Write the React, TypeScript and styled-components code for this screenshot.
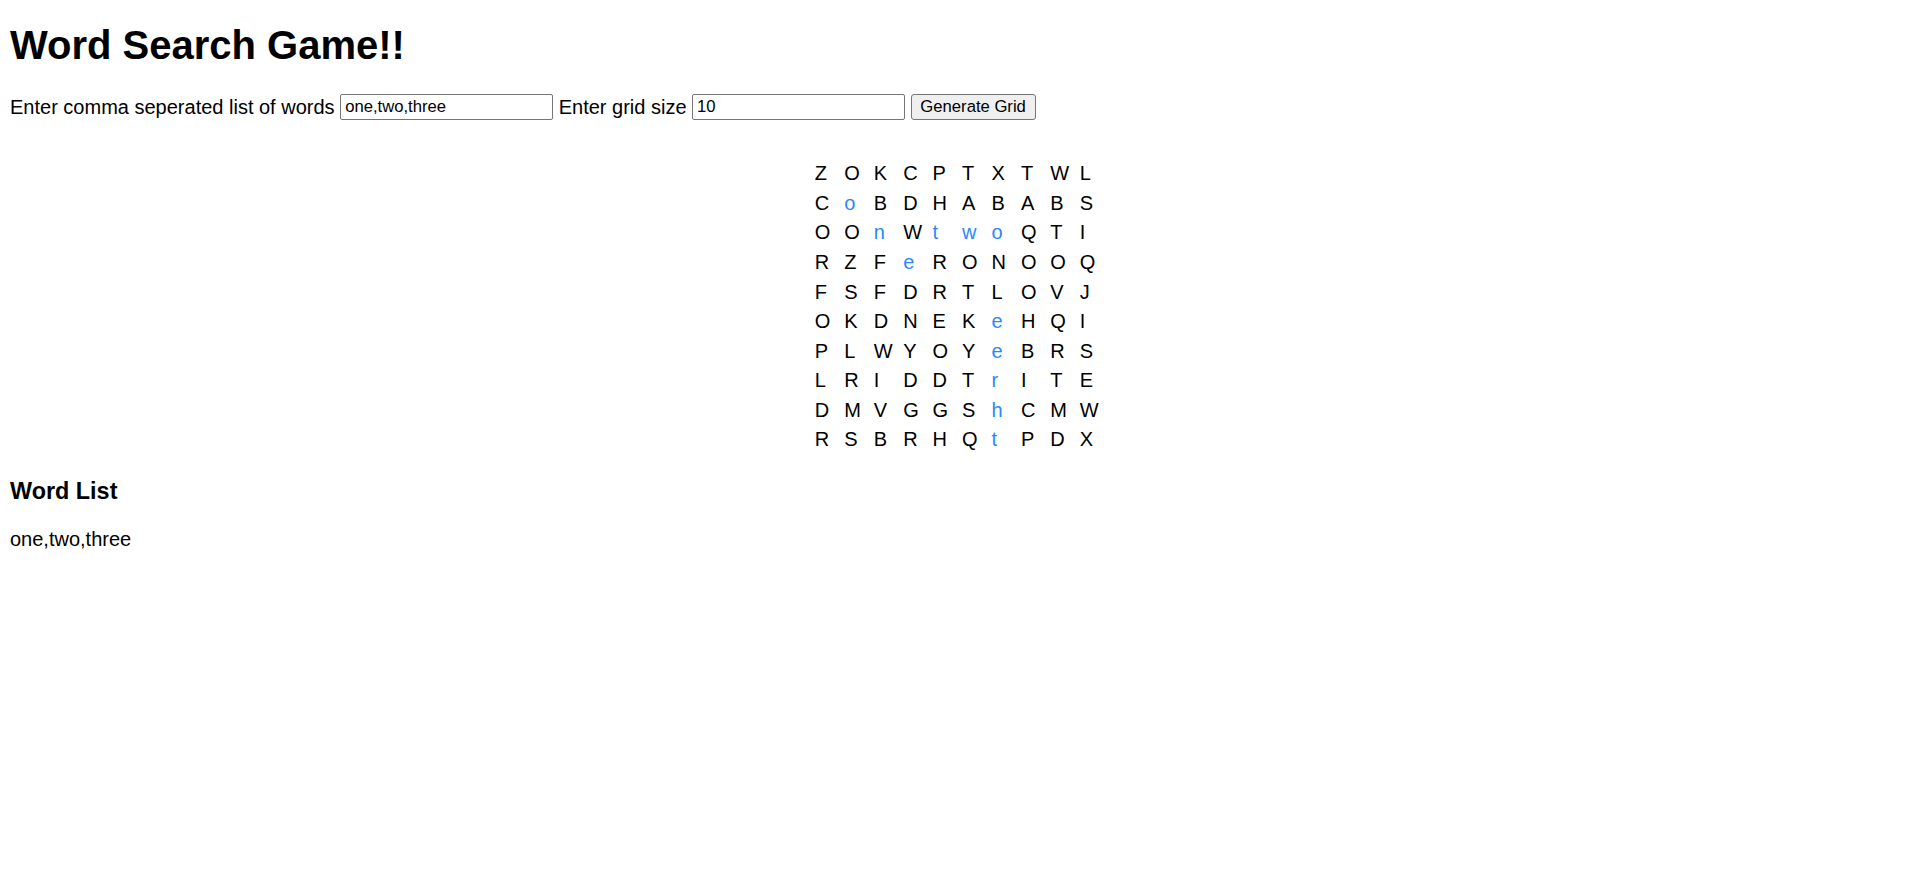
import React, { useState } from 'react';
import styled, { createGlobalStyle } from 'styled-components';

const GlobalStyle = createGlobalStyle`
  html, body {
    margin: 0;
    padding: 0;
    background: #ffffff;
  }
  body {
    font-family: "Liberation Sans", Arial, sans-serif;
    font-size: 20px;
    color: #000000;
  }
`;

const ROWS = [
  'ZOKCPTXTWL',
  'CoBDHABABS',
  'OOnWtwoQTI',
  'RZFeRONOOQ',
  'FSFDRTLOVJ',
  'OKDNEKeHQI',
  'PLWYOYeBRS',
  'LRIDDTrITE',
  'DMVGGShCMW',
  'RSBRHQtPDX',
];

function App() {
  const [words, setWords] = useState('one,two,three');
  const [size, setSize] = useState('10');

  return (
    <Page>
      <GlobalStyle />
      <Title>Word Search Game!!</Title>
      <Form onSubmit={(e) => e.preventDefault()}>
        <Label>Enter comma seperated list of words</Label>
        <TextInput value={words} onChange={(e) => setWords(e.target.value)} />
        <Label>Enter grid size</Label>
        <TextInput value={size} onChange={(e) => setSize(e.target.value)} />
        <Button type="submit">Generate Grid</Button>
      </Form>
      <GridWrap>
        <Grid>
          {ROWS.map((row, r) =>
            row.split('').map((ch, c) => (
              <Cell key={r + '-' + c} $found={ch === ch.toLowerCase()}>
                {ch}
              </Cell>
            ))
          )}
        </Grid>
      </GridWrap>
      <SubTitle>Word List</SubTitle>
      <WordList>{words}</WordList>
    </Page>
  );
}

export default App;

const Page = styled.div`
  padding: 0 10px;
`;

const Title = styled.h1`
  margin: 22px 0 0;
  font-size: 40px;
  line-height: 46px;
  font-weight: bold;
`;

const Form = styled.form`
  display: flex;
  align-items: center;
  gap: 5.56px;
  height: 26px;
  margin-top: 26px;
`;

const Label = styled.label`
  font-size: 20px;
  line-height: 23px;
  white-space: nowrap;
`;

const TextInput = styled.input`
  box-sizing: border-box;
  width: 213px;
  height: 26px;
  padding: 1px 4px;
  border: 1px solid #767676;
  border-radius: 2px;
  font-family: "Liberation Sans", Arial, sans-serif;
  font-size: 16.67px;
  color: #000000;
  background: #ffffff;
  outline: none;
`;

const Button = styled.button`
  box-sizing: border-box;
  width: 125px;
  height: 26px;
  padding: 1px 8px;
  border: 1px solid #767676;
  border-radius: 3px;
  background: #efefef;
  font-family: "Liberation Sans", Arial, sans-serif;
  font-size: 16.67px;
  color: #000000;
  cursor: pointer;
`;

const GridWrap = styled.div`
  display: flex;
  justify-content: center;
  margin-top: 39px;
`;

const Grid = styled.div`
  display: grid;
  grid-template-columns: repeat(10, 29.44px);
  grid-auto-rows: 29.58px;
`;

const Cell = styled.span<{ $found: boolean }>`
  display: flex;
  align-items: center;
  padding-left: 2px;
  font-size: 20px;
  line-height: 23px;
  color: ${(p) => (p.$found ? '#2b87ff' : '#000000')};
`;

const SubTitle = styled.h3`
  margin: 23px 0 0;
  font-size: 23.4px;
  line-height: 27px;
  font-weight: bold;
`;

const WordList = styled.p`
  margin: 23px 0 0;
  font-size: 20px;
  line-height: 23px;
`;
